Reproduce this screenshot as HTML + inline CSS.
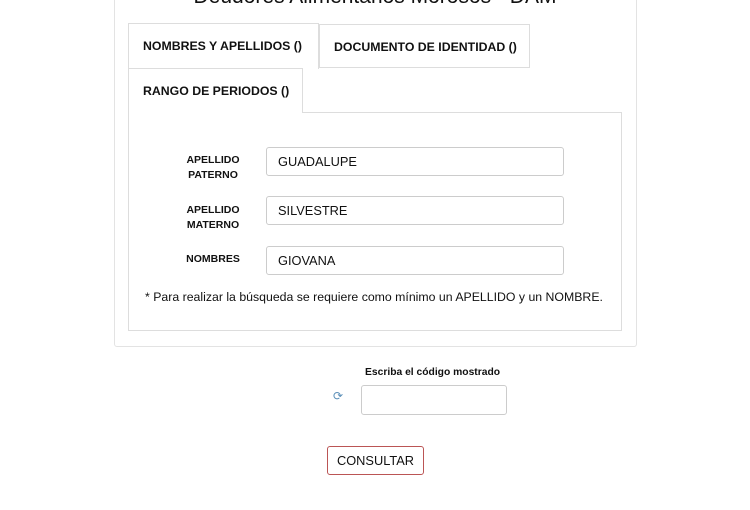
<!DOCTYPE html>
<html><head><style>
body{margin:0;width:750px;height:510px;background:#fff;font-family:"Liberation Sans",sans-serif;color:#111;position:relative;overflow:hidden}
.a{position:absolute}
.title{left:0;width:750px;top:-15px;text-align:center;font-size:21px;line-height:24px}
.panel{left:114px;top:-5px;width:521px;height:350px;border:1px solid #e3e3e3;border-radius:3px}
.tab{border:1px solid #ddd;border-bottom:none;background:#fff;font-weight:bold;font-size:12.3px;box-sizing:border-box;padding-left:14px;line-height:44px}
.box{left:128px;top:112px;width:494px;height:219px;border:1px solid #ddd;box-sizing:border-box}
.lbl{font-weight:bold;font-size:10.5px;line-height:15px;width:60px;text-align:center}
.inp{left:266px;width:298px;height:29px;border:1px solid #ccc;border-radius:3px;box-sizing:border-box;font-size:12.8px;padding-left:11px;line-height:28px}
</style></head><body>
<div class="a title">Deudores Alimentarios Morosos - DAM</div>
<div class="a panel"></div>
<div class="a tab" style="left:319px;top:24px;width:211px;height:44px;border-bottom:1px solid #ddd">DOCUMENTO DE IDENTIDAD ()</div>
<div class="a tab" style="left:128px;top:23px;width:191px;height:46px">NOMBRES Y APELLIDOS ()</div>
<div class="a box"></div>
<div class="a tab" style="left:128px;top:68px;width:175px;height:45px">RANGO DE PERIODOS ()</div>
<div class="a lbl" style="left:183px;top:153px">APELLIDO PATERNO</div>
<div class="a lbl" style="left:183px;top:203px">APELLIDO MATERNO</div>
<div class="a lbl" style="left:183px;top:252px">NOMBRES</div>
<div class="a inp" style="top:147px">GUADALUPE</div>
<div class="a inp" style="top:196px">SILVESTRE</div>
<div class="a inp" style="top:246px">GIOVANA</div>
<div class="a" style="left:145px;top:290px;font-size:12.3px">* Para realizar la búsqueda se requiere como mínimo un APELLIDO y un NOMBRE.</div>
<div class="a" style="left:365px;top:367px;font-size:10.3px;font-weight:bold">Escriba el código mostrado</div>
<div class="a" style="left:333px;top:389px;font-size:12px;color:#5b8fb8">⟳</div>
<div class="a" style="left:361px;top:385px;width:146px;height:30px;border:1px solid #ccc;border-radius:3px;box-sizing:border-box"></div>
<div class="a" style="left:327px;top:446px;width:97px;height:29px;border:1px solid #b55;border-radius:3px;box-sizing:border-box;font-size:12.8px;text-align:center;line-height:28px">CONSULTAR</div>
</body></html>
